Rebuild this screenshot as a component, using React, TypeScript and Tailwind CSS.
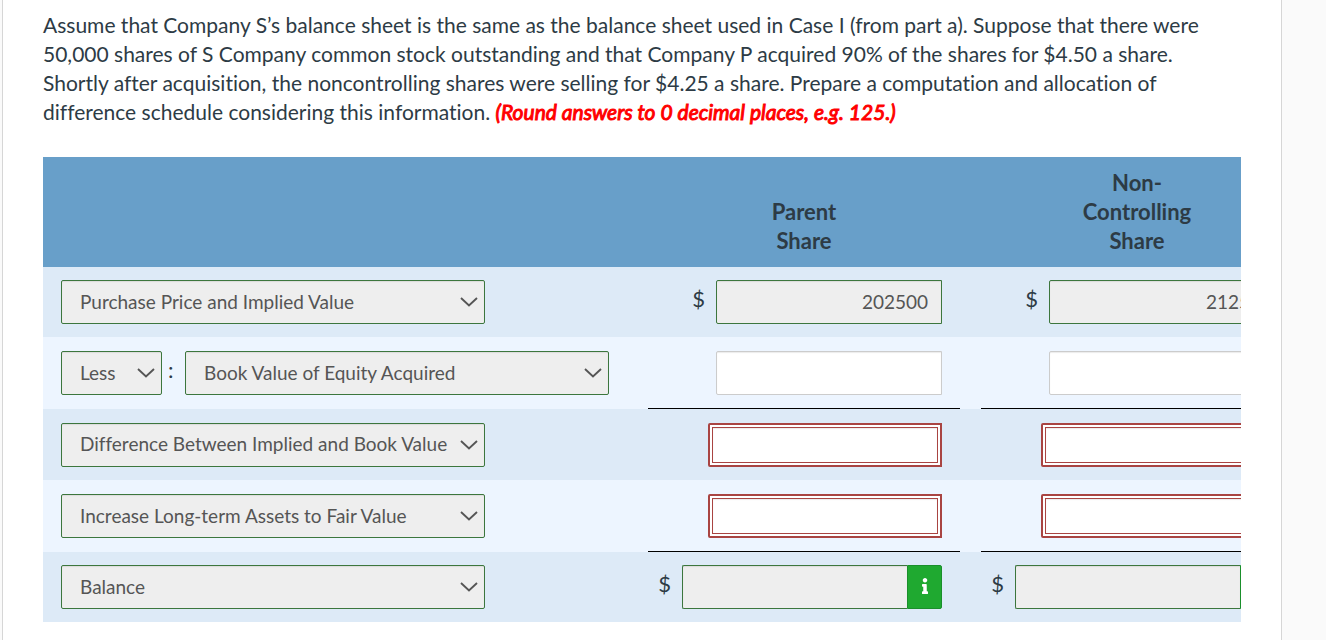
import { useState, type ReactNode } from "react";
import { FaInfo } from "react-icons/fa";
import clsx from "clsx";

type AmountState = "correct" | "empty" | "wrong" | "info";

interface ScheduleRow {
  id: string;
  label: string;
  prefix?: string;
  state: AmountState;
  parent: string;
  nonControlling: string;
  underline?: boolean;
}

const rows: ScheduleRow[] = [
  { id: "price", label: "Purchase Price and Implied Value", state: "correct", parent: "202500", nonControlling: "21250" },
  { id: "book", label: "Book Value of Equity Acquired", prefix: "Less", state: "empty", parent: "", nonControlling: "", underline: true },
  { id: "difference", label: "Difference Between Implied and Book Value", state: "wrong", parent: "", nonControlling: "" },
  { id: "increase", label: "Increase Long-term Assets to Fair Value", state: "wrong", parent: "", nonControlling: "", underline: true },
  { id: "balance", label: "Balance", state: "info", parent: "", nonControlling: "" },
];

interface LockedSelectProps {
  value: string;
  label: string;
  className: string;
}

function LockedSelect({ value, label, className }: LockedSelectProps) {
  return (
    <div className={clsx("relative", className)}>
      <select
        disabled
        aria-label={label}
        defaultValue={value}
        className="block h-11 w-full appearance-none rounded-[2px] border border-[#3c763d] bg-[#eeeeee] pr-8 pb-[2px] pl-[18px] text-[19px] text-[#555555] opacity-100 shadow-[inset_0_1px_1px_rgba(0,0,0,0.08)]"
      >
        <option>{value}</option>
      </select>
      <svg
        viewBox="0 0 18 10"
        aria-hidden="true"
        className="pointer-events-none absolute top-[17px] right-[7px] h-[10px] w-[18px]"
      >
        <path d="M1 1 L9 8.4 L17 1" fill="none" stroke="#555555" strokeWidth="1.9" />
      </svg>
    </div>
  );
}

interface AmountProps {
  state: AmountState;
  value: string;
  label: string;
}

const inputBase =
  "block min-w-0 px-[13px] pb-[2px] text-right text-[19px] text-[#555555] outline-none shadow-[inset_0_1px_1px_rgba(0,0,0,0.08)]";

function Dollar({ children }: { children: ReactNode }) {
  return (
    <div className="flex items-center justify-end gap-[11px]">
      <span className="pb-2">$</span>
      {children}
    </div>
  );
}

function Amount({ state, value, label }: AmountProps) {
  const [amount, setAmount] = useState(value);

  if (state === "correct") {
    return (
      <Dollar>
        <input
          disabled
          aria-label={label}
          value={amount}
          className={clsx(inputBase, "h-11 w-[226px] rounded-l-[2px] border border-[#3c763d] bg-[#eeeeee]")}
        />
      </Dollar>
    );
  }

  if (state === "info") {
    return (
      <Dollar>
        <div className="flex">
          <input
            disabled
            aria-label={label}
            value={amount}
            className={clsx(inputBase, "h-11 w-[225px] rounded-l-[2px] border border-r-0 border-[#3c763d] bg-[#eeeeee]")}
          />
          <button
            type="button"
            aria-label={`${label} feedback`}
            className="flex h-11 w-[35px] items-center justify-center rounded-r-[2px] border border-[#1a8f2b] bg-[#1fa930] pb-[2px] text-white"
          >
            <FaInfo size={16} />
          </button>
        </div>
      </Dollar>
    );
  }

  if (state === "wrong") {
    return (
      <div className="ml-auto w-[234px] rounded-l-[2px] border-2 border-[#a94442] bg-white p-[2px]">
        <input
          aria-label={label}
          value={amount}
          onChange={(e) => setAmount(e.target.value)}
          className={clsx(inputBase, "h-9 w-full border border-[#a94442] bg-white")}
        />
      </div>
    );
  }

  return (
    <input
      aria-label={label}
      value={amount}
      onChange={(e) => setAmount(e.target.value)}
      className={clsx(inputBase, "ml-auto h-11 w-[226px] rounded-l-[2px] border border-[#cccccc] bg-white")}
    />
  );
}

export default function App() {
  return (
    <div className="min-h-screen bg-[#fafafa] pr-[44px] pl-[2px] font-['Lato',sans-serif] text-[22px] leading-[29px] text-[#2d3b45] [font-variant-ligatures:none]">
      <main className="min-h-screen border-x border-[#d6d6d6] bg-white px-10 pt-[10px] pb-[18px]">
        <p className="mb-[31px] text-[21px]">
          Assume that Company S’s balance sheet is the same as the balance sheet used in Case I (from part a). Suppose
          that there were 50,000 shares of S Company common stock outstanding and that Company P acquired 90% of the
          shares for $4.50 a share. Shortly after acquisition, the noncontrolling shares were selling for $4.25 a share.
          Prepare a computation and allocation of difference schedule considering this information.{" "}
          <strong className="font-normal text-[#ff0000] italic [-webkit-text-stroke:1px_#ff0000]">
            (Round answers to 0 decimal places, e.g. 125.)
          </strong>
        </p>

        {/* The schedule is wider than the panel and gets cut at its right edge */}
        <div className="overflow-hidden">
          <table className="w-[1250px] table-fixed border-separate border-spacing-0">
            <colgroup>
              <col className="w-[605px]" />
              <col className="w-[312px]" />
              <col className="w-[21px]" />
              <col className="w-[312px]" />
            </colgroup>
            <thead>
              <tr className="h-[110px] bg-[#689fc9] align-bottom">
                <td />
                <th scope="col" className="pb-3 font-bold">
                  Parent
                  <br />
                  Share
                </th>
                <td />
                <th scope="col" className="pb-3 font-bold">
                  Non-
                  <br />
                  Controlling
                  <br />
                  Share
                </th>
              </tr>
            </thead>
            <tbody>
              {rows.map((row) => {
                const amountCell = clsx("px-[18px] py-[13px]", row.underline && "border-b border-black");
                return (
                  <tr
                    key={row.id}
                    className={clsx(
                      "odd:bg-[#ddeaf7] even:bg-[#edf5ff]",
                      row.underline ? "h-[72px]" : row.state === "wrong" ? "h-[71px]" : "h-[70px]"
                    )}
                  >
                    <td className="px-[18px]">
                      <div className="flex items-center">
                        {row.prefix && (
                          <>
                            <LockedSelect value={row.prefix} label="Add or less" className="w-[101px]" />
                            <span className="w-[23px] pb-2 pl-[6px]">:</span>
                          </>
                        )}
                        <LockedSelect value={row.label} label="Schedule line" className="w-[424px]" />
                      </div>
                    </td>
                    <td className={amountCell}>
                      <Amount state={row.state} value={row.parent} label={`${row.label}, parent share`} />
                    </td>
                    <td />
                    <td className={amountCell}>
                      <Amount
                        state={row.state}
                        value={row.nonControlling}
                        label={`${row.label}, non-controlling share`}
                      />
                    </td>
                  </tr>
                );
              })}
            </tbody>
          </table>
        </div>
      </main>
    </div>
  );
}
